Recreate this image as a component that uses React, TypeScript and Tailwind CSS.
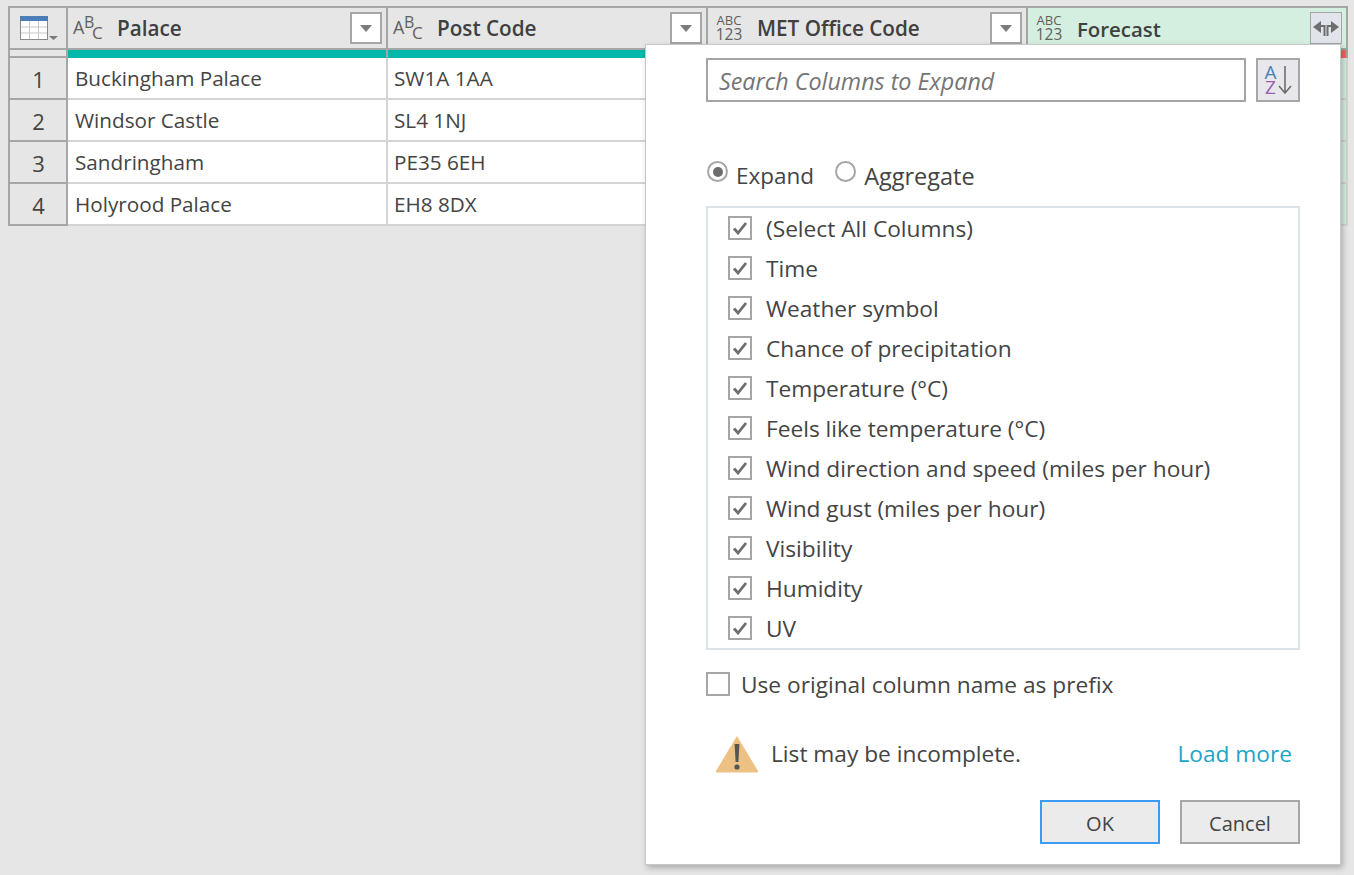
import { FC } from "react";

const FONT = "font-['Open_Sans','Noto_Sans',sans-serif]";

const rows = [
  ["1", "Buckingham Palace", "SW1A 1AA"],
  ["2", "Windsor Castle", "SL4 1NJ"],
  ["3", "Sandringham", "PE35 6EH"],
  ["4", "Holyrood Palace", "EH8 8DX"],
];

const columnItems = [
  "(Select All Columns)",
  "Time",
  "Weather symbol",
  "Chance of precipitation",
  "Temperature (°C)",
  "Feels like temperature (°C)",
  "Wind direction and speed (miles per hour)",
  "Wind gust (miles per hour)",
  "Visibility",
  "Humidity",
  "UV",
];

const TextTypeIcon: FC = () => (
  <span className="relative block h-[32px] w-[32px] shrink-0 text-[#606060]">
    <span className="absolute left-0 top-[5px] text-[18px] leading-[20px]">A</span>
    <span className="absolute left-[11px] top-0 text-[16px] leading-[20px]">B</span>
    <span className="absolute left-[19px] top-[11px] text-[17px] leading-[20px]">C</span>
  </span>
);

const AnyTypeIcon: FC = () => (
  <span className="flex h-[32px] w-[32px] shrink-0 flex-col items-center text-[#606060]">
    <span className="mt-[2px] text-[13px] leading-[13px]">ABC</span>
    <span className="text-[15.5px] leading-[14px]">123</span>
  </span>
);

const FilterButton: FC = () => (
  <span className="ml-auto flex h-[32px] w-[32px] items-center justify-center border-2 border-[#a6a6a6] bg-white">
    <svg width="12" height="7" viewBox="0 0 12 7">
      <path d="M0 0h12L6 7z" fill="#7a7a7a" />
    </svg>
  </span>
);

const ExpandButton: FC = () => (
  <span className="ml-auto flex h-[32px] w-[32px] items-center justify-center border border-[#a6a6a6] bg-[#e1e4ea]">
    <svg width="30" height="30" viewBox="0 0 30 30">
      <path d="M2 14l8-6v12z" fill="#6e6e6e" />
      <path d="M28 14l-8-6v12z" fill="#6e6e6e" />
      <path d="M10 13h3.5v10M20 13h-3.5v10" fill="none" stroke="#6e6e6e" strokeWidth="2" />
    </svg>
  </span>
);

const HeaderCell: FC<{ title: string; icon: "text" | "any" }> = ({ title, icon }) => (
  <div className="flex h-[40px] items-center border-r-2 border-[#a6a6a6] pl-[5px] pr-[4px]">
    {icon === "text" ? <TextTypeIcon /> : <AnyTypeIcon />}
    <span className="ml-[12px] mt-[2px] text-[20.7px] font-semibold text-[#404040]">{title}</span>
    <FilterButton />
  </div>
);

const Check: FC<{ checked?: boolean }> = ({ checked }) => (
  <span className="flex h-[24px] w-[24px] shrink-0 items-center justify-center border-2 border-[#a6a6a6] bg-white">
    {checked && (
      <svg width="16" height="14" viewBox="0 0 16 14">
        <path d="M2 7.5l4 4.5L14 2" fill="none" stroke="#6e6e6e" strokeWidth="2.8" />
      </svg>
    )}
  </span>
);

const Radio: FC<{ checked?: boolean }> = ({ checked }) => (
  <span className="mb-[9px] flex h-[21px] w-[21px] items-center justify-center rounded-full border-2 border-[#a6a6a6] bg-white">
    {checked && <span className="h-[10px] w-[10px] rounded-full bg-[#6e6e6e]" />}
  </span>
);

const App: FC = () => {
  return (
    <div className={`relative h-[875px] w-[1354px] overflow-hidden bg-[#e6e6e6] pl-[8px] pt-[6px] text-[#444444] ${FONT}`}>
      {/* Table */}
      <div className="grid w-[1340px] grid-cols-[58px_320px_320px_320px_320px] border-l-2 border-t-2 border-[#a6a6a6]">
        <div className="flex h-[40px] items-center border-r-2 border-[#a6a6a6] pl-[10px]">
          <svg width="38" height="24" viewBox="0 0 38 24">
            <rect x="0.5" y="0.5" width="27" height="23" fill="#fff" stroke="#8a8a8a" />
            <rect x="0" y="0" width="28" height="5" fill="#4a7ebb" />
            <path d="M1 11h26M1 17h26M9.5 5v18M18.5 5v18" stroke="#c8c8c8" />
            <path d="M29 20h9l-4.5 4z" fill="#7a7a7a" />
          </svg>
        </div>
        <HeaderCell title="Palace" icon="text" />
        <HeaderCell title="Post Code" icon="text" />
        <HeaderCell title="MET Office Code" icon="any" />
        <div className="flex h-[40px] items-center border-r-2 border-[#a6a6a6] bg-[#d4efe0] pl-[5px] pr-[4px]">
          <AnyTypeIcon />
          <span className="ml-[12px] mt-[2px] text-[20.4px] font-semibold text-[#404040]">Forecast</span>
          <ExpandButton />
        </div>

        {/* Quality bars */}
        <div className="h-[10px] border-y-2 border-r-2 border-[#a6a6a6]" />
        <div className="h-[10px] border-t-2 border-r-2 border-[#a6a6a6] bg-[#01b8aa]" />
        <div className="h-[10px] border-t-2 border-r-2 border-[#a6a6a6] bg-[#01b8aa]" />
        <div className="h-[10px] border-t-2 border-r-2 border-[#a6a6a6] bg-[#01b8aa]" />
        <div className="flex h-[10px] justify-end border-t-2 border-r-2 border-[#a6a6a6] bg-[#01b8aa]">
          <span className="w-[6px] bg-[#fd625e]" />
        </div>

        {rows.map((row) => (
          <div key={row[0]} className="contents">
            <div className="flex h-[42px] items-center justify-center border-b-2 border-r-2 border-[#a6a6a6] pl-[1px] pt-[2px] text-[22px]">
              {row[0]}
            </div>
            <div className="flex h-[42px] items-center border-b-2 border-r-2 border-[#d4d4d4] bg-white pl-[7px] pt-[2px] text-[20.7px]">
              {row[1]}
            </div>
            <div className="flex h-[42px] items-center border-b-2 border-r-2 border-[#d4d4d4] bg-white pl-[6px] pt-[2px] text-[20.7px]">
              {row[2]}
            </div>
            <div className="h-[42px] border-b-2 border-r-2 border-[#d4d4d4] bg-white" />
            <div className="h-[42px] border-b-2 border-r-2 border-[#d4d4d4] bg-[#d4efe0]" />
          </div>
        ))}
      </div>

      {/* Expand popup */}
      <div className="absolute left-[645px] top-[44px] h-[821px] w-[696px] border border-[#c8c8c8] bg-white pl-[60px] pr-[40px] pt-[13px] shadow-[2px_3px_6px_rgba(0,0,0,0.25)]">
        <div className="flex gap-[10px]">
          <div className="flex h-[44px] flex-1 items-center border-2 border-[#a6a6a6] pl-[11px] pt-[2px] text-[23.3px] italic text-[#757575]">
            Search Columns to Expand
          </div>
          <div className="flex h-[44px] w-[44px] items-center justify-center border-2 border-[#a6a6a6] bg-[#e8e8ec]">
            <span className="flex flex-col items-center text-[19px] font-medium leading-[15px]">
              <span className="text-[#4a7ebb]">A</span>
              <span className="text-[#9b5fb5]">Z</span>
            </span>
            <svg width="14" height="30" viewBox="0 0 14 30" className="ml-[1px]">
              <path d="M7 1v27M1 21l6 7 6-7" fill="none" stroke="#6e6e6e" strokeWidth="1.6" />
            </svg>
          </div>
        </div>

        <div className="mt-[54px] flex items-center text-[22.5px] leading-[40px]">
          <span className="ml-[1px]">
            <Radio checked />
          </span>
          <span className="ml-[8px]">Expand</span>
          <span className="ml-[21px]">
            <Radio />
          </span>
          <span className="ml-[8px] text-[23.5px]">Aggregate</span>
        </div>

        <div className="mt-[10px] h-[444px] overflow-hidden border-2 border-[#dde2e6] pl-[20px]">
          {columnItems.map((item) => (
            <div key={item} className="flex h-[40px] items-center text-[22.7px]">
              <Check checked />
              <span className="ml-[14px] mt-[2px] whitespace-nowrap">{item}</span>
            </div>
          ))}
        </div>

        <div className="mt-[14px] flex h-[40px] items-center text-[22.7px]">
          <Check />
          <span className="ml-[11px] mt-[2px]">Use original column name as prefix</span>
        </div>

        <div className="mt-[30px] flex h-[40px] items-center text-[22.7px]">
          <svg width="44" height="38" viewBox="0 0 44 38" className="ml-[9px]">
            <path d="M22 1L43 36a1 1 0 0 1-1 1.5H2A1 1 0 0 1 1 36z" fill="#ecc183" />
            <path d="M19.6 9h4.8l-1 18h-2.8z" fill="#555555" />
            <circle cx="22" cy="32" r="2.6" fill="#555555" />
          </svg>
          <span className="ml-[12px]">List may be incomplete.</span>
          <span className="ml-auto pr-[8px] text-[#1ba5c7]">Load more</span>
        </div>

        <div className="mt-[26px] flex justify-end gap-[20px]">
          <button className="flex h-[44px] w-[120px] items-center justify-center border-2 border-[#3c9cf5] bg-[#ebebeb] pt-[3px] text-[20px]">
            OK
          </button>
          <button className="flex h-[44px] w-[120px] items-center justify-center border-2 border-[#a6a6a6] bg-[#ebebeb] pt-[3px] text-[20px]">
            Cancel
          </button>
        </div>
      </div>
    </div>
  );
};

export default App;
